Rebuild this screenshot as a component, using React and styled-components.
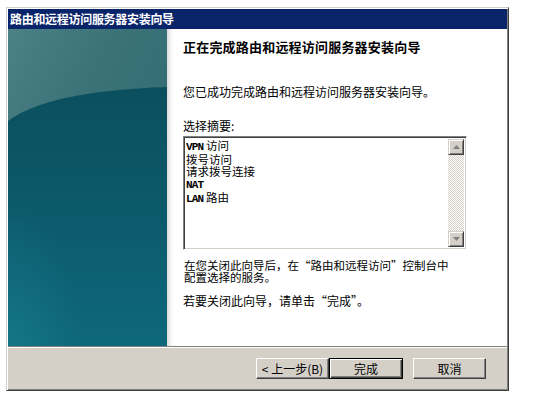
import React from 'react'
import styled, { createGlobalStyle } from 'styled-components'

const GlobalStyle = createGlobalStyle`
  body {
    margin: 0;
    background: #ffffff;
    font-family: "Noto Sans CJK SC", "Liberation Sans", sans-serif;
    font-size: 12px;
    color: #000;
  }
`

const Dialog = styled.div`
  margin: 7px 0 0 6px;
  width: 503px;
  height: 384px;
  box-sizing: border-box;
  background: #d4d0c8;
  border-top: 1px solid #d4d0c8;
  border-left: 1px solid #d4d0c8;
  border-right: 1px solid #404040;
  border-bottom: 1px solid #404040;
  box-shadow: inset 1px 1px 0 #ffffff, inset -1px -1px 0 #808080;
  padding: 1px;
  display: flex;
  flex-direction: column;
`

const TitleBar = styled.div`
  height: 20px;
  background: #0a246a;
  color: #fff;
  font-weight: bold;
  font-size: 12px;
  line-height: 20px;
  padding-left: 2px;
  letter-spacing: -0.3px;
`

const Body = styled.div`
  display: flex;
  height: 317px;
  background: #fff;
  border-bottom: 1px solid #808080;
`

const Banner = styled.div`
  width: 159px;
  flex-shrink: 0;
  svg {
    display: block;
  }
`

const Content = styled.div`
  flex: 1;
  padding: 10px 0 0 16px;
  box-shadow: inset 6px 0 5px -4px rgba(0, 0, 0, 0.18);
`

const Heading = styled.div`
  font-size: 13px;
  font-weight: bold;
  line-height: 16px;
  letter-spacing: 0.2px;
`

const Text = styled.div`
  line-height: 12px;
  font-size: ${p => (p.$small ? 11.5 : 12)}px;
  margin-top: ${p => p.$top || 0}px;
  padding-left: ${p => p.$indent || 0}px;
`

const ListBox = styled.div`
  margin-top: 4px;
  width: 284px;
  height: 114px;
  box-sizing: border-box;
  border-top: 1px solid #808080;
  border-left: 1px solid #808080;
  border-right: 1px solid #ffffff;
  border-bottom: 1px solid #ffffff;
  box-shadow: inset 1px 1px 0 #404040, inset -1px -1px 0 #d4d0c8;
  display: flex;
  background: #fff;
`

const ListItems = styled.div`
  flex: 1;
  padding: 2px 0 0 2px;
  line-height: 12px;
  font-size: 11.5px;
  white-space: pre;
`

const Latin = styled.span`
  font-family: "Liberation Mono", monospace;
  font-weight: bold;
  font-size: 11px;
  letter-spacing: -0.8px;
`

const ScrollBar = styled.div`
  width: 16px;
  margin: 2px 2px 2px 0;
  display: flex;
  flex-direction: column;
  background-color: #ffffff;
  background-image: repeating-conic-gradient(#d4d0c8 0 25%, #ffffff 0 50%);
  background-size: 2px 2px;
`

const ScrollButton = styled.div`
  width: 16px;
  height: 16px;
  box-sizing: border-box;
  background: #d4d0c8;
  border-top: 1px solid #d4d0c8;
  border-left: 1px solid #d4d0c8;
  border-right: 1px solid #404040;
  border-bottom: 1px solid #404040;
  box-shadow: inset 1px 1px 0 #fff, inset -1px -1px 0 #808080;
  display: flex;
  align-items: center;
  justify-content: center;
  margin-top: ${p => (p.$bottom ? 'auto' : '0')};
`

const Footer = styled.div`
  flex: 1;
  border-top: 1px solid #ffffff;
  display: flex;
  justify-content: flex-end;
  align-items: flex-start;
  padding: 10px 21px 0 0;
`

const Button = styled.button`
  width: ${p => p.$w || 73}px;
  height: 21px;
  box-sizing: border-box;
  margin-left: ${p => p.$gap || 0}px;
  padding: 0;
  font-family: "Noto Sans CJK SC", "Liberation Sans", sans-serif;
  font-size: 12px;
  line-height: 17px;
  color: #000;
  background: #d4d0c8;
  border-top: 1px solid ${p => (p.$default ? '#000' : '#ffffff')};
  border-left: 1px solid ${p => (p.$default ? '#000' : '#ffffff')};
  border-right: 1px solid ${p => (p.$default ? '#000' : '#404040')};
  border-bottom: 1px solid ${p => (p.$default ? '#000' : '#404040')};
  box-shadow: ${p =>
    p.$default
      ? 'inset 1px 1px 0 #fff, inset -1px -1px 0 #404040, inset -2px -2px 0 #808080'
      : 'inset -1px -1px 0 #808080'};
`

const Arrow = ({ up }) => (
  <svg width="7" height="4" viewBox="0 0 7 4">
    <path d={up ? 'M3.5 0 L7 4 L0 4 Z' : 'M0 0 L7 0 L3.5 4 Z'} fill="#808080" />
  </svg>
)

const BannerArt = () => (
  <svg width="159" height="317" viewBox="0 0 159 317">
    <defs>
      <linearGradient id="topG" x1="0" y1="0" x2="1" y2="1">
        <stop offset="0" stopColor="#4c8186" />
        <stop offset="0.35" stopColor="#3a7277" />
        <stop offset="1" stopColor="#2c6870" />
      </linearGradient>
      <linearGradient id="lowG" x1="0" y1="0" x2="0" y2="1">
        <stop offset="0" stopColor="#0b4f5e" />
        <stop offset="0.5" stopColor="#0c5a6b" />
        <stop offset="1" stopColor="#0e687c" />
      </linearGradient>
      <radialGradient id="cornerG" cx="0" cy="1" r="0.45">
        <stop offset="0" stopColor="#1a8090" stopOpacity="0.55" />
        <stop offset="1" stopColor="#1a8090" stopOpacity="0" />
      </radialGradient>
    </defs>
    <rect width="159" height="317" fill="url(#topG)" />
    <path d="M0 92 Q40 62 159 58 L159 317 L0 317 Z" fill="url(#lowG)" />
    <rect width="159" height="317" fill="url(#cornerG)" />
  </svg>
)

export default function App() {
  return (
    <>
      <GlobalStyle />
      <Dialog>
        <TitleBar>路由和远程访问服务器安装向导</TitleBar>
        <Body>
          <Banner>
            <BannerArt />
          </Banner>
          <Content>
            <Heading>正在完成路由和远程访问服务器安装向导</Heading>
            <Text $top={31}>您已成功完成路由和远程访问服务器安装向导。</Text>
            <Text $top={22}>选择摘要:</Text>
            <ListBox>
              <ListItems>
                <div><Latin>VPN</Latin> 访问</div>
                <div>拨号访问</div>
                <div>请求拨号连接</div>
                <div><Latin>NAT</Latin></div>
                <div><Latin>LAN</Latin> 路由</div>
              </ListItems>
              <ScrollBar>
                <ScrollButton><Arrow up /></ScrollButton>
                <ScrollButton $bottom><Arrow /></ScrollButton>
              </ScrollBar>
            </ListBox>
            <Text $top={9} $indent={1} $small>在您关闭此向导后，在“路由和远程访问”控制台中</Text>
            <Text $indent={1} $small>配置选择的服务。</Text>
            <Text $top={12}>若要关闭此向导，请单击“完成”。</Text>
          </Content>
        </Body>
        <Footer>
          <Button $w={73}>&lt; 上一步(B)</Button>
          <Button $w={74} $default>完成</Button>
          <Button $w={73} $gap={10}>取消</Button>
        </Footer>
      </Dialog>
    </>
  )
}
